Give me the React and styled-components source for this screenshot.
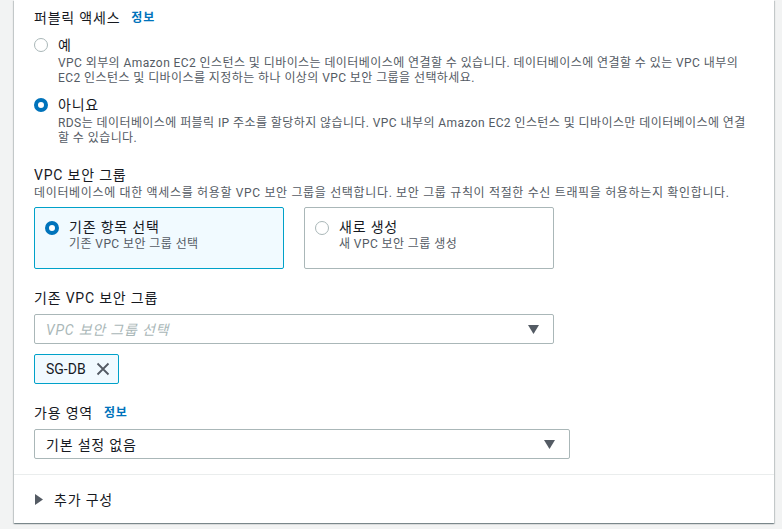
import React from 'react';
import styled, { createGlobalStyle } from 'styled-components';

const GlobalStyle = createGlobalStyle`
  html, body {
    margin: 0;
    padding: 0;
    background: #f2f3f3;
  }
  body {
    font-family: 'Roboto', 'Noto Sans CJK KR', sans-serif;
    color: #16191f;
    letter-spacing: 0.05em;
  }
`;

const Page = styled.div`
  padding: 0 8px 6px 14px;
`;

const Panel = styled.div`
  width: 760px;
  background: #ffffff;
  box-shadow: 0 1px 1px 0 rgba(0, 28, 36, 0.3), 1px 1px 1px 0 rgba(0, 28, 36, 0.15),
    -1px 1px 1px 0 rgba(0, 28, 36, 0.15);
`;

const Content = styled.div`
  padding: 7px 20px 15px 20px;
  display: flex;
  flex-direction: column;
`;

const Field = styled.div`
  display: flex;
  flex-direction: column;
  margin-top: ${(p) => p.gap || 0}px;
`;

const Label = styled.div`
  font-size: 14px;
  line-height: 22px;
  color: #16191f;
  display: flex;
  align-items: center;
  gap: 11px;
`;

const InfoLink = styled.a`
  font-size: 12px;
  font-weight: 700;
  color: #0073bb;
  text-decoration: none;
`;

const Hint = styled.div`
  font-size: 12px;
  line-height: 15px;
  letter-spacing: 0.055em;
  color: #545b64;
  margin-bottom: 6px;
`;

const RadioList = styled.div`
  display: flex;
  flex-direction: column;
  gap: 8px;
  margin-top: 5px;
`;

const RadioRow = styled.label`
  display: grid;
  grid-template-columns: 14px 1fr;
  column-gap: 10px;
  cursor: pointer;
`;

const Dot = styled.span`
  box-sizing: border-box;
  width: 14px;
  height: 14px;
  border-radius: 50%;
  margin-top: 4px;
  background: #ffffff;
  border: ${(p) => (p.checked ? '4px solid #0073bb' : '1.5px solid #aab7b8')};
`;

const RadioText = styled.div`
  display: flex;
  flex-direction: column;
`;

const RadioTitle = styled.div`
  font-size: 14px;
  line-height: ${(p) => p.lh || 22}px;
  color: #16191f;
`;

const RadioDesc = styled.div`
  font-size: 12px;
  line-height: 15px;
  letter-spacing: 0.035em;
  color: #545b64;
`;

const Tiles = styled.div`
  display: grid;
  grid-template-columns: 250px 250px;
  gap: 20px;
`;

const Tile = styled.label`
  box-sizing: border-box;
  height: 62px;
  padding: 9px 10px;
  border: 1px solid ${(p) => (p.checked ? '#00a1c9' : '#aab7b8')};
  border-radius: 2px;
  background: ${(p) => (p.checked ? '#f1faff' : '#ffffff')};
  display: grid;
  grid-template-columns: 14px 1fr;
  column-gap: 10px;
  cursor: pointer;
`;

const Select = styled.div`
  box-sizing: border-box;
  width: ${(p) => p.width}px;
  height: 30px;
  margin-top: 5px;
  border: 1px solid #aab7b8;
  border-radius: 2px;
  padding: 0 14px 0 11px;
  display: flex;
  align-items: center;
  justify-content: space-between;
  font-size: 14px;
  color: ${(p) => (p.placeholder ? '#aab7b8' : '#16191f')};
  font-style: ${(p) => (p.placeholder ? 'italic' : 'normal')};
`;

const Token = styled.div`
  box-sizing: border-box;
  align-self: flex-start;
  height: 30px;
  margin-top: 10px;
  padding: 0 8px 0 11px;
  display: flex;
  align-items: center;
  gap: 10px;
  border: 1px solid #00a1c9;
  border-radius: 2px;
  background: #f1faff;
  font-size: 14px;
  letter-spacing: 0;
  color: #16191f;
`;

const Divider = styled.div`
  border-top: 1px solid #eaeded;
`;

const Expander = styled.div`
  height: 48px;
  padding: 0 20px 0 21px;
  display: flex;
  align-items: center;
  gap: 11px;
  font-size: 14px;
  color: #16191f;
`;

const Caret = () => (
  <svg width="11" height="9" viewBox="0 0 11 9">
    <path d="M0 0 H11 L5.5 9 Z" fill="#545b64" />
  </svg>
);

const RightCaret = () => (
  <svg width="8" height="11" viewBox="0 0 8 11">
    <path d="M0 0 L8 5.5 L0 11 Z" fill="#545b64" />
  </svg>
);

const CloseIcon = () => (
  <svg width="14" height="14" viewBox="0 0 14 14">
    <path d="M1.5 1.5 L12.5 12.5 M12.5 1.5 L1.5 12.5" stroke="#545b64" strokeWidth="1.8" fill="none" />
  </svg>
);

const App = () => (
  <Page>
    <GlobalStyle />
    <Panel>
      <Content>
        <Field>
          <Label>
            퍼블릭 액세스 <InfoLink href="#">정보</InfoLink>
          </Label>
          <RadioList>
            <RadioRow>
              <Dot />
              <RadioText>
                <RadioTitle>예</RadioTitle>
                <RadioDesc>
                  VPC 외부의 Amazon EC2 인스턴스 및 디바이스는 데이터베이스에 연결할 수 있습니다. 데이터베이스에 연결할 수 있는 VPC 내부의
                  EC2 인스턴스 및 디바이스를 지정하는 하나 이상의 VPC 보안 그룹을 선택하세요.
                </RadioDesc>
              </RadioText>
            </RadioRow>
            <RadioRow>
              <Dot checked />
              <RadioText>
                <RadioTitle>아니요</RadioTitle>
                <RadioDesc>
                  RDS는 데이터베이스에 퍼블릭 IP 주소를 할당하지 않습니다. VPC 내부의 Amazon EC2 인스턴스 및 디바이스만 데이터베이스에 연결할 수 있습니다.
                </RadioDesc>
              </RadioText>
            </RadioRow>
          </RadioList>
        </Field>

        <Field gap={18}>
          <Label>VPC 보안 그룹</Label>
          <Hint>데이터베이스에 대한 액세스를 허용할 VPC 보안 그룹을 선택합니다. 보안 그룹 규칙이 적절한 수신 트래픽을 허용하는지 확인합니다.</Hint>
          <Tiles>
            <Tile checked>
              <Dot checked />
              <RadioText>
                <RadioTitle lh={20}>기존 항목 선택</RadioTitle>
                <RadioDesc>기존 VPC 보안 그룹 선택</RadioDesc>
              </RadioText>
            </Tile>
            <Tile>
              <Dot />
              <RadioText>
                <RadioTitle lh={20}>새로 생성</RadioTitle>
                <RadioDesc>새 VPC 보안 그룹 생성</RadioDesc>
              </RadioText>
            </Tile>
          </Tiles>
        </Field>

        <Field gap={18}>
          <Label>기존 VPC 보안 그룹</Label>
          <Select width={520} placeholder>
            <span>VPC 보안 그룹 선택</span>
            <Caret />
          </Select>
          <Token>
            SG-DB
            <CloseIcon />
          </Token>
        </Field>

        <Field gap={18}>
          <Label>
            가용 영역 <InfoLink href="#">정보</InfoLink>
          </Label>
          <Select width={536}>
            <span>기본 설정 없음</span>
            <Caret />
          </Select>
        </Field>
      </Content>
      <Divider />
      <Expander>
        <RightCaret />
        추가 구성
      </Expander>
    </Panel>
  </Page>
);

export default App;
